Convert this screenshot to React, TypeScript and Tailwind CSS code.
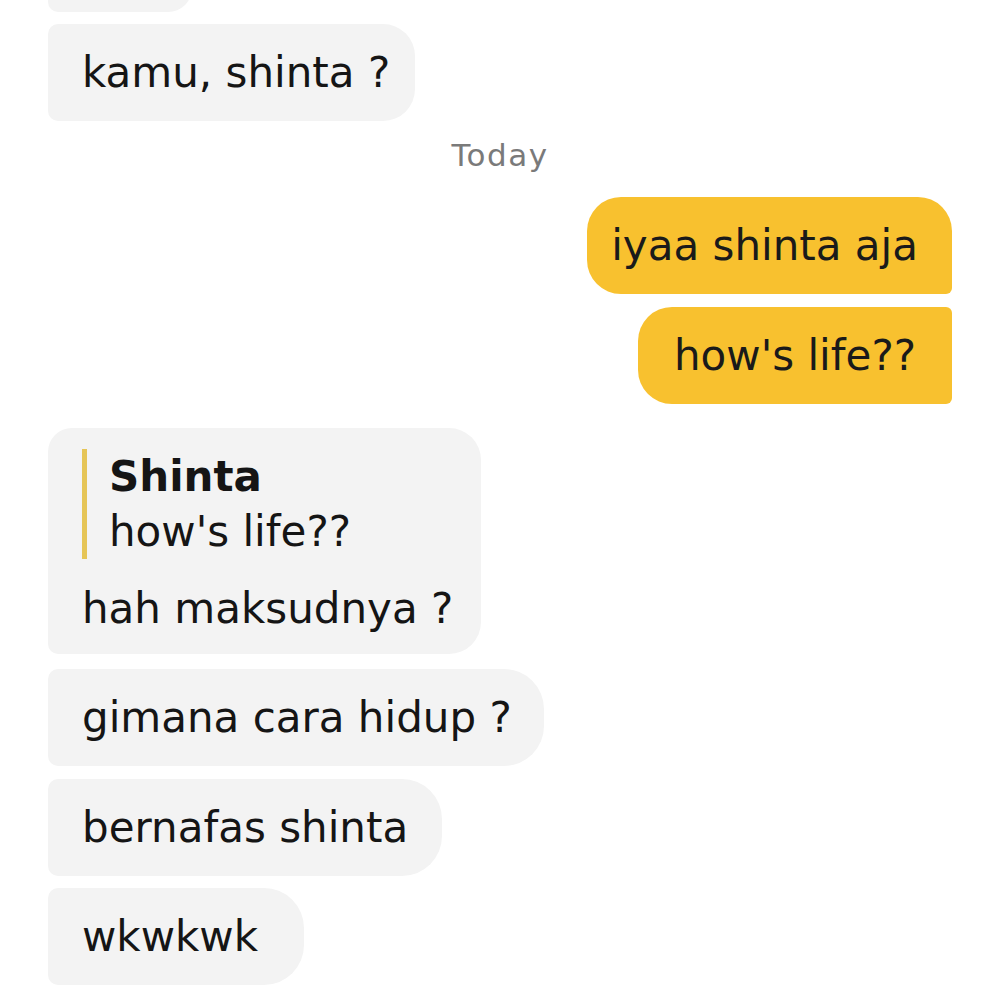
import React from "react";

const font = { fontFamily: "'DejaVu Sans', 'Noto Sans', sans-serif" };

function Left({ children, cls = "" }: { children: React.ReactNode; cls?: string }) {
  return (
    <div className={`self-start bg-[#f3f3f3] pl-[34px] py-[21px] text-[42px] leading-[55px] text-[#151515] ${cls}`}>
      {children}
    </div>
  );
}

export default function App() {
  return (
    <div className="w-[1000px] h-[1000px] overflow-hidden bg-white" style={font}>
      <div className="flex flex-col px-[48px]">
        <div className="self-start w-[144px] h-[97px] mt-[-85px] bg-[#f3f3f3] rounded-bl-[10px] rounded-br-[24px]" />
        <Left cls="mt-[12px] pr-[25px] rounded-l-[10px] rounded-r-[32px]">kamu, shinta ?</Left>
        <div className="mt-[15px] self-center text-[31px] leading-[38px] tracking-[1.5px] text-[#7a7a7a]">Today</div>
        <div className="mt-[23px] self-end bg-[#f8c12f] pl-[24px] pr-[34px] py-[21px] text-[42px] leading-[55px] text-[#1a1a1a] rounded-tl-[34px] rounded-bl-[34px] rounded-tr-[34px] rounded-br-[6px]">
          iyaa shinta aja
        </div>
        <div className="mt-[13px] self-end bg-[#f8c12f] pl-[36px] pr-[36px] py-[21px] text-[42px] leading-[55px] text-[#1a1a1a] rounded-l-[34px] rounded-r-[6px]">
          how's life??
        </div>
        <div className="mt-[24px] self-start bg-[#f3f3f3] pl-[34px] pr-[28px] pt-[21px] pb-[18px] text-[42px] leading-[55px] text-[#151515] rounded-tl-[24px] rounded-bl-[10px] rounded-r-[32px]">
          <div className="border-l-[5px] border-[#e6c556] pl-[22px]">
            <div className="font-bold">Shinta</div>
            <div>how's life??</div>
          </div>
          <div className="mt-[22px]">hah maksudnya ?</div>
        </div>
        <Left cls="mt-[15px] pr-[32px] rounded-l-[10px] rounded-r-[40px]">gimana cara hidup ?</Left>
        <Left cls="mt-[13px] pr-[34px] rounded-l-[10px] rounded-r-[40px]">bernafas shinta</Left>
        <Left cls="mt-[12px] pr-[46px] rounded-l-[10px] rounded-r-[40px]">wkwkwk</Left>
      </div>
    </div>
  );
}
